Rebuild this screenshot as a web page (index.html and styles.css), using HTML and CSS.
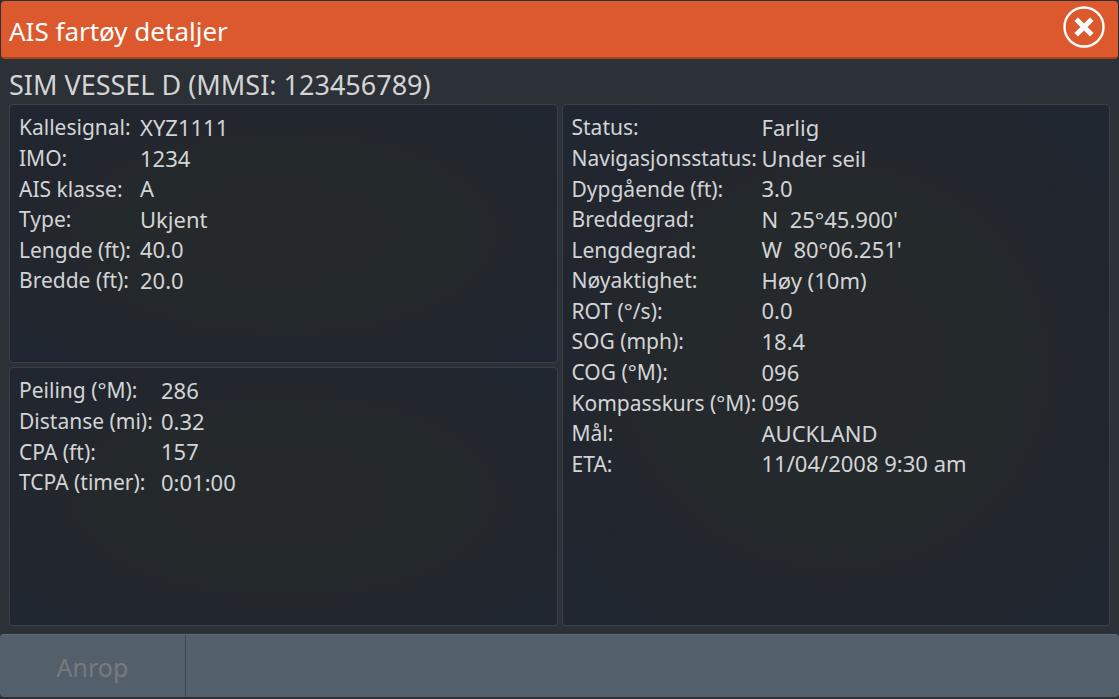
FILE: index.html
```html
<!DOCTYPE html>
<html lang="no">
<head>
<meta charset="utf-8">
<meta name="viewport" content="width=device-width, initial-scale=1">
<title>AIS fartøy detaljer</title>
<link rel="stylesheet" href="styles.css">
</head>
<body>
<div class="dialog">
  <header class="titlebar">
    <h1 class="title">AIS fartøy detaljer</h1>
    <button class="close" type="button" aria-label="Lukk">
      <svg class="close-icon" viewBox="0 0 42 42" aria-hidden="true">
        <circle cx="21" cy="21" r="19.5" fill="none" stroke="#fff" stroke-width="2.4"/>
        <path d="M13.2 13.2 28.8 28.8M28.8 13.2 13.2 28.8" fill="none" stroke="#fff" stroke-width="5"/>
      </svg>
    </button>
  </header>
  <main class="content">
    <h2 class="vessel">SIM VESSEL D (MMSI: 123456789)</h2>
    <div class="panels">
      <section class="panel">
        <dl class="fields fields-identity">
          <dt>Kallesignal:</dt><dd>XYZ1111</dd>
          <dt>IMO:</dt><dd>1234</dd>
          <dt>AIS klasse:</dt><dd>A</dd>
          <dt>Type:</dt><dd>Ukjent</dd>
          <dt>Lengde (ft):</dt><dd>40.0</dd>
          <dt>Bredde (ft):</dt><dd>20.0</dd>
        </dl>
      </section>
      <section class="panel">
        <dl class="fields fields-range">
          <dt>Peiling (°M):</dt><dd>286</dd>
          <dt>Distanse (mi):</dt><dd>0.32</dd>
          <dt>CPA (ft):</dt><dd>157</dd>
          <dt>TCPA (timer):</dt><dd>0:01:00</dd>
        </dl>
      </section>
      <section class="panel panel-tall">
        <dl class="fields fields-status">
          <dt>Status:</dt><dd>Farlig</dd>
          <dt>Navigasjonsstatus:</dt><dd>Under seil</dd>
          <dt>Dypgående (ft):</dt><dd>3.0</dd>
          <dt>Breddegrad:</dt><dd>N  25°45.900'</dd>
          <dt>Lengdegrad:</dt><dd>W  80°06.251'</dd>
          <dt>Nøyaktighet:</dt><dd>Høy (10m)</dd>
          <dt>ROT (°/s):</dt><dd>0.0</dd>
          <dt>SOG (mph):</dt><dd>18.4</dd>
          <dt>COG (°M):</dt><dd>096</dd>
          <dt>Kompasskurs (°M):</dt><dd>096</dd>
          <dt>Mål:</dt><dd>AUCKLAND</dd>
          <dt>ETA:</dt><dd>11/04/2008 9:30 am</dd>
        </dl>
      </section>
    </div>
  </main>
  <footer class="actions">
    <button class="action" type="button" disabled>Anrop</button>
  </footer>
</div>
</body>
</html>
```
FILE: styles.css
```css
* {
  box-sizing: border-box;
}

body {
  margin: 0;
  background: #2c3037;
  color: #d3d4d5;
  font-family: Tahoma, "Noto Sans", "Open Sans", sans-serif;
}

.dialog {
  display: flex;
  flex-direction: column;
  min-height: 100vh;
  padding: 1px 0 2px;
}

.titlebar {
  display: flex;
  align-items: center;
  justify-content: space-between;
  height: 58px;
  margin: 0 1px;
  padding: 0 13px 4px 8px;
  background: #dc592d;
  border-bottom: 2px solid #a8431f;
  border-radius: 4px;
}

.title {
  margin: 0;
  padding-top: 8px;
  color: #fff;
  font-size: 26px;
  font-weight: 400;
  line-height: 36px;
}

.close {
  width: 42px;
  height: 42px;
  padding: 0;
  background: none;
  border: 0;
}

.close-icon {
  display: block;
  width: 100%;
  height: 100%;
}

.content {
  display: flex;
  flex: 1;
  flex-direction: column;
  padding: 7px 9px 8px;
}

.vessel {
  margin: 0;
  font-size: 27px;
  font-weight: 400;
  line-height: 38px;
}

.panels {
  display: grid;
  flex: 1;
  grid-template-columns: 1fr 1fr;
  grid-template-rows: 1fr 1fr;
  gap: 4px;
}

.panel {
  padding: 7px 9px;
  background: radial-gradient(ellipse at center, #25292c 0%, #24292c 45%, #22262e 65%, #202730 100%);
  border: 1px solid #3b4148;
  border-radius: 4px;
}

.panel-tall {
  grid-row: 1 / 3;
  grid-column: 2;
}

.fields {
  display: grid;
  align-items: end;
  margin: 0;
  font-size: 22px;
  line-height: 1.39;
  white-space: pre;
}

.fields-identity {
  grid-template-columns: 121px 1fr;
}

.fields-range {
  grid-template-columns: 142px 1fr;
}

.fields-status {
  grid-template-columns: 190px 1fr;
}

.fields dt {
  font-size: 21px;
}

.fields dd {
  margin: 0;
}

.actions {
  display: flex;
  height: 63px;
  background: #53606b;
  border-top: 1px solid #5c6873;
  border-radius: 4px;
}

.action {
  width: 186px;
  padding: 2px 0 0;
  background: none;
  border: 0;
  border-right: 1px solid #3d4852;
  color: #787b7c;
  font-family: inherit;
  font-size: 25px;
}
```
